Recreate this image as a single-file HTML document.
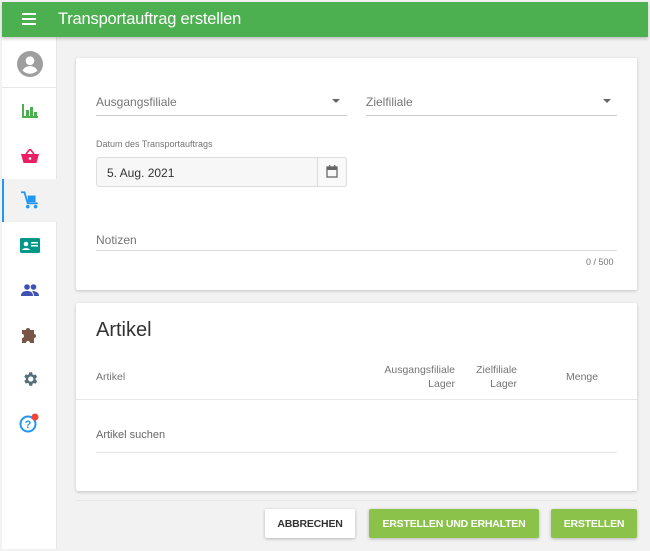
<!DOCTYPE html>
<html><head><meta charset="utf-8"><style>
*{box-sizing:border-box;margin:0;padding:0}
body{width:650px;height:551px;background:#f2f2f2;font-family:"Liberation Sans",Arial,sans-serif;position:relative;overflow:hidden;color:#333}
.hdr{position:absolute;left:2px;top:2px;width:646px;height:35px;background:#4caf50;box-shadow:0 2px 3px rgba(0,0,0,.2);z-index:2}
.hdr .t{position:absolute;left:56px;top:8px;color:#fff;font-size:16.5px;letter-spacing:-0.2px}
.side{position:absolute;left:2px;top:37px;width:55px;height:512px;background:#fff;border-right:1px solid #e6e6e6}
.ic{position:absolute;left:0;width:55px;display:flex;justify-content:center;align-items:center;height:44px}
.card{position:absolute;left:76px;width:561px;background:#fff;box-shadow:0 1px 3px rgba(0,0,0,.2);border-radius:2px}
.lbl{position:absolute;font-size:11px;color:#757575}
.line{position:absolute;height:1px;background:#ddd}
.btn{position:absolute;top:509px;height:29px;font-size:10.5px;font-weight:bold;display:flex;align-items:center;justify-content:center;border-radius:2px;box-shadow:0 1px 3px rgba(0,0,0,.25);letter-spacing:-0.2px}
.g{background:#8bc34a;color:#fff}
</style></head><body>
<div class="hdr">
<svg style="position:absolute;left:20px;top:11px" width="14" height="12"><rect y="0" width="14" height="2" fill="#fff"/><rect y="5" width="14" height="2" fill="#fff"/><rect y="10" width="14" height="2" fill="#fff"/></svg>
<div class="t">Transportauftrag erstellen</div></div>
<div class="side">
<div class="ic" style="top:5px"><svg width="26" height="26" viewBox="0 0 24 24"><circle cx="12" cy="12" r="12" fill="#9e9e9e"/><circle cx="12" cy="9" r="4" fill="#fff"/><path d="M5 18c2-3 4.5-4 7-4s5 1 7 4c-2 2-4.5 3-7 3s-5-1-7-3z" fill="#fff"/></svg></div>
<div style="position:absolute;top:50px;left:0;width:55px;height:1px;background:#e6e6e6"></div>
<div class="ic" style="top:52px"><svg width="16" height="14"><rect x="0" y="0" width="2" height="14" fill="#4caf50"/><rect x="0" y="12" width="16" height="2" fill="#4caf50"/><rect x="4" y="6" width="3" height="7" fill="#4caf50"/><rect x="8" y="3" width="3" height="10" fill="#4caf50"/><rect x="12" y="8" width="3" height="5" fill="#4caf50"/></svg></div>
<div class="ic" style="top:97px"><svg width="18" height="14" viewBox="0 0 18 14"><path d="M5 5L9 0l4 5" stroke="#e91e63" stroke-width="1.6" fill="none"/><path d="M0 5h18l-2.5 9h-13z" fill="#e91e63"/><circle cx="9" cy="9.5" r="1.3" fill="#fff"/></svg></div>
<div style="position:absolute;top:142px;left:0;width:55px;height:43px;background:#f2f2f2;border-left:2px solid #2196f3"></div>
<div class="ic" style="top:141px"><svg width="20" height="20" viewBox="0 0 18 18"><path d="M1 2h3l3 10h9" stroke="#2196f3" stroke-width="1.6" fill="none"/><rect x="7" y="5" width="7" height="6" fill="#2196f3"/><circle cx="7" cy="15" r="1.6" fill="#2196f3"/><circle cx="14" cy="15" r="1.6" fill="#2196f3"/></svg></div>
<div class="ic" style="top:186px"><svg width="20" height="15"><rect width="20" height="15" rx="1.5" fill="#009688"/><circle cx="6" cy="6" r="2.3" fill="#fff"/><path d="M2 12c1-2.5 7-2.5 8 0z" fill="#fff"/><rect x="11" y="4" width="7" height="1.5" fill="#fff"/><rect x="11" y="7" width="7" height="1.5" fill="#fff"/></svg></div>
<div class="ic" style="top:231px"><svg width="18" height="12" viewBox="0 0 18 12"><circle cx="6" cy="3" r="2.8" fill="#3f51b5"/><circle cx="12.5" cy="3" r="2.8" fill="#3f51b5"/><path d="M0 12c0-4 3-5 6-5s6 1 6 5z" fill="#3f51b5"/><path d="M11 7c3 0 7 1 7 5h-5c0-2-1-4-2-5z" fill="#3f51b5"/></svg></div>
<div class="ic" style="top:276px"><svg width="18" height="18" viewBox="0 0 18 18"><path d="M1 4h4a2 2 0 1 1 4 0h4v4a2 2 0 1 1 0 4v5H9a2 2 0 1 0-4 0H1v-5a2 2 0 1 0 0-4z" fill="#795548"/></svg></div>
<div class="ic" style="top:320px"><svg width="18" height="18" viewBox="0 0 24 24"><path fill="#546e7a" d="M19.4 13a7.5 7.5 0 0 0 0-2l2.1-1.6-2-3.5-2.5 1a7 7 0 0 0-1.7-1L15 3h-4l-.4 2.7a7 7 0 0 0-1.7 1l-2.5-1-2 3.5L6.5 11a7.5 7.5 0 0 0 0 2l-2.1 1.6 2 3.5 2.5-1a7 7 0 0 0 1.7 1L11 21h4l.4-2.7a7 7 0 0 0 1.700-1l2.5 1 2-3.5zM13 15.5a3.5 3.5 0 1 1 0-7 3.5 3.5 0 0 1 0 7z"/></svg></div>
<div class="ic" style="top:364px"><svg width="22" height="22" viewBox="0 0 22 22"><circle cx="9" cy="12" r="7.5" stroke="#2196f3" stroke-width="2" fill="none"/><text x="9" y="16" font-size="11" font-weight="bold" fill="#2196f3" text-anchor="middle" font-family="Liberation Sans">?</text><circle cx="16" cy="5" r="3.5" fill="#f44336"/></svg></div>
</div>

<div class="card" style="top:58px;height:232px">
<div class="lbl" style="left:20px;top:37px;font-size:12px">Ausgangsfiliale</div>
<svg style="position:absolute;left:256px;top:41px" width="8" height="4"><path d="M0 0h8L4 4z" fill="#666"/></svg>
<div class="line" style="left:20px;top:57px;width:251px;background:#ccc"></div>
<div class="lbl" style="left:290px;top:37px;font-size:12px">Zielfiliale</div>
<svg style="position:absolute;left:527px;top:41px" width="8" height="4"><path d="M0 0h8L4 4z" fill="#666"/></svg>
<div class="line" style="left:290px;top:57px;width:251px;background:#ccc"></div>
<div class="lbl" style="left:20px;top:81px;font-size:9px">Datum des Transportauftrags</div>
<div style="position:absolute;left:20px;top:99px;width:251px;height:30px;border:1px solid #ddd;border-radius:3px;background:#f7f7f7"></div>
<div style="position:absolute;left:241px;top:99px;width:30px;height:30px;border:1px solid #ddd;border-radius:0 3px 3px 0;background:#f9f9f9"></div>
<svg style="position:absolute;left:250px;top:107px" width="12" height="13"><rect x="1" y="2" width="10" height="10" stroke="#666" stroke-width="1.3" fill="none"/><rect x="1" y="2" width="10" height="3" fill="#666"/><rect x="3" y="0" width="1.3" height="3" fill="#666"/><rect x="8" y="0" width="1.3" height="3" fill="#666"/></svg>
<div style="position:absolute;left:31px;top:108px;font-size:12px;color:#333">5. Aug. 2021</div>
<div class="lbl" style="left:20px;top:175px;font-size:12px">Notizen</div>
<div class="line" style="left:20px;top:192px;width:521px"></div>
<div class="lbl" style="left:510px;top:199px;font-size:9px">0 / 500</div>
</div>

<div class="card" style="top:303px;height:188px">
<div style="position:absolute;left:20px;top:16px;font-size:20px;color:#333">Artikel</div>
<div class="lbl" style="left:20px;top:68px;font-size:10.5px">Artikel</div>
<div class="lbl" style="left:295px;top:60px;font-size:10.5px;text-align:right;width:84px;line-height:14px">Ausgangsfiliale<br>Lager</div>
<div class="lbl" style="left:385px;top:60px;font-size:10.5px;text-align:right;width:56px;line-height:14px">Zielfiliale<br>Lager</div>
<div class="lbl" style="left:490px;top:68px;font-size:10.5px">Menge</div>
<div class="line" style="left:0;top:96px;width:561px;background:#e6e6e6"></div>
<div class="lbl" style="left:20px;top:126px;font-size:11px;color:#666">Artikel suchen</div>
<div class="line" style="left:20px;top:149px;width:521px;background:#e6e6e6"></div>
</div>
<div class="line" style="left:76px;top:500px;width:561px;background:#e6e6e6"></div>

<div class="btn" style="left:265px;width:90px;background:#fff;color:#333">ABBRECHEN</div>
<div class="btn g" style="left:369px;width:170px">ERSTELLEN UND ERHALTEN</div>
<div class="btn g" style="left:551px;width:86px">ERSTELLEN</div>
</body></html>
